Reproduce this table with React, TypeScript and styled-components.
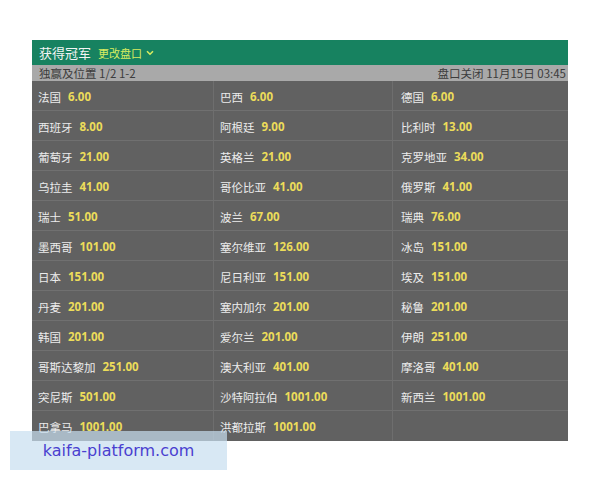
import React from "react";
import styled, { createGlobalStyle } from "styled-components";

const Global = createGlobalStyle`
  html, body { margin: 0; padding: 0; background: #ffffff; }
  body { width: 600px; height: 480px; position: relative; overflow: hidden;
    font-family: "Noto Sans CJK SC", "Liberation Sans", sans-serif; }
`;

const Page = styled.div`
  padding: 40px 32px 0 32px;
`;

const Panel = styled.div`
  width: 536px;
  display: flex;
  flex-direction: column;
`;

const Header = styled.div`
  height: 25px;
  background: #178260;
  display: flex;
  align-items: center;
  padding-left: 7px;
  gap: 7px;
`;

const Title = styled.span`
  color: #f4f4f4;
  font-size: 13px;
`;

const Change = styled.span`
  color: #d8ec60;
  font-size: 11px;
  display: flex;
  align-items: center;
  gap: 4px;
`;

const SubBar = styled.div`
  height: 16px;
  background: #a9a9a9;
  display: flex;
  align-items: center;
  justify-content: space-between;
  padding: 0 2px 0 7px;
  color: #3c3c3c;
  font-size: 11.5px;
`;

const Grid = styled.div`
  display: grid;
  grid-template-columns: 182px 179px 1fr;
  background: #616161;
`;

const Cell = styled.div<{ $last?: boolean; $col: number }>`
  height: 30px;
  box-sizing: border-box;
  padding-top: 2px;
  border-bottom: 1px solid ${p => (p.$last ? "transparent" : "#707070")};
  border-right: ${p => (p.$col < 2 ? "1px solid #6e6e6e" : "0")};
  display: flex;
  align-items: center;
  padding-left: ${p => (p.$col === 2 ? 8 : 6)}px;
  gap: 7px;
`;

const Name = styled.span`
  color: #ececec;
  font-size: 11.5px;
`;

const Odds = styled.span`
  color: #ecdc5a;
  font-size: 11.5px;
  font-weight: 700;
  font-family: "Open Sans", "Liberation Sans", sans-serif;
`;

const Watermark = styled.div`
  position: absolute;
  left: 10px;
  top: 431px;
  width: 217px;
  height: 39px;
  background: rgba(200, 222, 240, 0.7);
  display: flex;
  align-items: center;
  justify-content: center;
  color: #4a3fd0;
  font-family: "DejaVu Sans", "Liberation Sans", sans-serif;
  font-size: 16px;
`;

const data: [string, string][] = [
  ["法国", "6.00"], ["巴西", "6.00"], ["德国", "6.00"],
  ["西班牙", "8.00"], ["阿根廷", "9.00"], ["比利时", "13.00"],
  ["葡萄牙", "21.00"], ["英格兰", "21.00"], ["克罗地亚", "34.00"],
  ["乌拉圭", "41.00"], ["哥伦比亚", "41.00"], ["俄罗斯", "41.00"],
  ["瑞士", "51.00"], ["波兰", "67.00"], ["瑞典", "76.00"],
  ["墨西哥", "101.00"], ["塞尔维亚", "126.00"], ["冰岛", "151.00"],
  ["日本", "151.00"], ["尼日利亚", "151.00"], ["埃及", "151.00"],
  ["丹麦", "201.00"], ["塞内加尔", "201.00"], ["秘鲁", "201.00"],
  ["韩国", "201.00"], ["爱尔兰", "201.00"], ["伊朗", "251.00"],
  ["哥斯达黎加", "251.00"], ["澳大利亚", "401.00"], ["摩洛哥", "401.00"],
  ["突尼斯", "501.00"], ["沙特阿拉伯", "1001.00"], ["新西兰", "1001.00"],
  ["巴拿马", "1001.00"], ["洪都拉斯", "1001.00"], ["", ""],
];

export default function App() {
  return (
    <>
      <Global />
      <Page>
        <Panel>
          <Header>
            <Title>获得冠军</Title>
            <Change>
              更改盘口
              <svg width="8" height="6" viewBox="0 0 8 6">
                <path d="M1 1.2 L4 4.2 L7 1.2" stroke="#d8ec60" strokeWidth="1.6" fill="none" />
              </svg>
            </Change>
          </Header>
          <SubBar>
            <span>独赢及位置 1/2 1-2</span>
            <span>盘口关闭 11月15日 03:45</span>
          </SubBar>
          <Grid>
            {data.map(([n, o], i) => (
              <Cell key={i} $col={i % 3} $last={i >= 33}>
                {n && <Name>{n}</Name>}
                {o && <Odds>{o}</Odds>}
              </Cell>
            ))}
          </Grid>
        </Panel>
      </Page>
      <Watermark>kaifa-platform.com</Watermark>
    </>
  );
}
